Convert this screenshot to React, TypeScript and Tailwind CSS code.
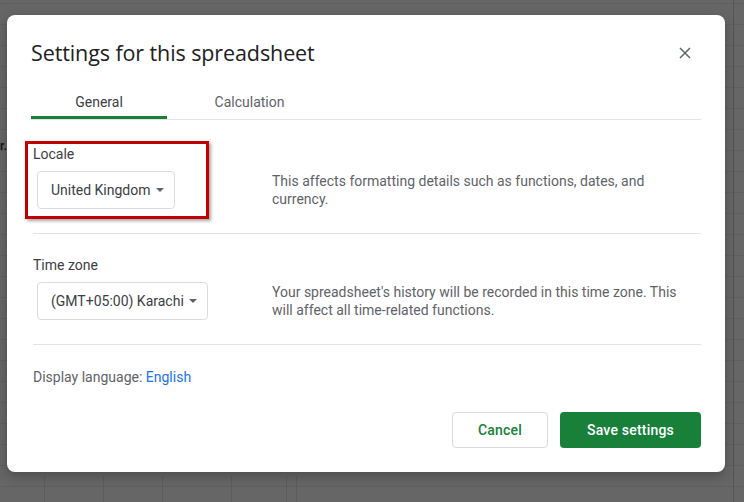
import React from "react";

function Caret() {
  return (
    <svg width="8" height="4" viewBox="0 0 8 4" className="shrink-0">
      <path d="M0 0 L8 0 L4 4 Z" fill="#5f6368" />
    </svg>
  );
}

function Select({ value, width }: { value: string; width: string }) {
  return (
    <div
      className={`${width} h-[38px] flex items-center justify-between pl-[13px] pr-[10px] border border-[#dadce0] rounded-[4px] bg-white text-[14px] text-[#3c4043]`}
    >
      <span className="whitespace-nowrap">{value}</span>
      <Caret />
    </div>
  );
}

export default function App() {
  return (
    <div className="relative w-[744px] h-[502px] overflow-hidden bg-[#666666] font-['Roboto',_'Liberation_Sans',_sans-serif]">
      {/* spreadsheet behind the overlay */}
      <div className="absolute inset-0 bg-[linear-gradient(#5f5f5f_1px,transparent_1px)] bg-[size:100%_21px] bg-[position:0_3px]" />
      <div className="absolute left-0 top-[137px] text-[12px] font-bold text-[#1a1a1a]">r.</div>
      <div className="absolute left-[725px] top-0 bottom-0 w-[9px] border-r border-[#555]" />
      <div className="absolute left-0 right-0 top-[476px] h-[26px] flex">
        <div className="w-[45px] border-r border-[#5c5c5c]" />
        <div className="w-[59px] border-r border-[#5c5c5c]" />
        <div className="w-[59px] border-r border-[#5c5c5c]" />
        <div className="w-[69px] border-r border-[#5c5c5c]" />
        <div className="w-[55px] border-r border-[#5c5c5c]" />
        <div className="w-[10px] border-r border-[#5c5c5c]" />
      </div>

      {/* dialog */}
      <div className="absolute left-[7px] top-[15px] w-[718px] h-[457px] bg-white rounded-[8px] shadow-[0_4px_12px_rgba(0,0,0,0.25)] px-[24px] pt-[24px] flex flex-col">
        <div className="flex items-center justify-between">
          <h1 className="text-[21.5px] leading-[28px] text-[#202124] font-['Open_Sans',_'Roboto',_sans-serif] tracking-[-0.1px]">
            Settings for this spreadsheet
          </h1>
          <button className="w-[24px] h-[24px] flex items-center justify-center mr-[4px]">
            <svg width="12" height="12" viewBox="0 0 12 12">
              <path d="M1 1 L11 11 M11 1 L1 11" stroke="#5f6368" strokeWidth="1.5" />
            </svg>
          </button>
        </div>

        {/* tabs */}
        <div className="mt-[16px] flex border-b border-[#e3e3e3] w-[670px]">
          <div className="w-[136px] h-[36px] flex items-center justify-center text-[14px] text-[#3c4043] border-b-[3px] border-[#188038] mb-[-1px] pt-[6px]">
            General
          </div>
          <div className="w-[165px] h-[36px] flex items-center justify-center text-[14px] text-[#5f6368] pt-[3px]">
            Calculation
          </div>
        </div>

        {/* locale */}
        <div className="relative ml-[2px] w-[668px] pt-[24px] pb-[24px] border-b border-[#e3e3e3]">
          <div className="text-[14px] leading-[20px] text-[#3c4043]">Locale</div>
          <div className="mt-[7px] flex items-center">
            <div className="w-[239px] pl-[4px]">
              <Select value="United Kingdom" width="w-[138px]" />
            </div>
            <p className="text-[14px] leading-[18px] text-[#5f6368] w-[420px]">
              This affects formatting details such as functions, dates, and currency.
            </p>
          </div>
          <div className="absolute left-[-8px] top-[21px] w-[184px] h-[78px] border-[3px] border-[#c00000] shadow-[2px_2px_3px_rgba(0,0,0,0.35)]" />
        </div>

        {/* time zone */}
        <div className="ml-[2px] w-[668px] pt-[21px] pb-[24px] border-b border-[#e3e3e3]">
          <div className="text-[14px] leading-[20px] text-[#3c4043]">Time zone</div>
          <div className="mt-[7px] flex items-center">
            <div className="w-[239px] pl-[4px]">
              <Select value="(GMT+05:00) Karachi" width="w-[171px]" />
            </div>
            <p className="text-[14px] leading-[18px] text-[#5f6368] w-[420px]">
              Your spreadsheet's history will be recorded in this time zone. This will affect all time-related functions.
            </p>
          </div>
        </div>

        <div className="ml-[2px] pt-[22px] text-[14px] leading-[20px] text-[#5f6368]">
          Display language: <span className="text-[#1a73e8]">English</span>
        </div>

        <div className="mt-auto mb-[24px] flex justify-end gap-[12px] w-[670px]">
          <button className="w-[96px] h-[36px] rounded-[4px] border border-[#dadce0] text-[14px] font-medium text-[#188038] tracking-[0.2px]">
            Cancel
          </button>
          <button className="w-[141px] h-[36px] rounded-[4px] bg-[#188038] text-[14px] font-medium text-white tracking-[0.2px]">
            Save settings
          </button>
        </div>
      </div>
    </div>
  );
}
